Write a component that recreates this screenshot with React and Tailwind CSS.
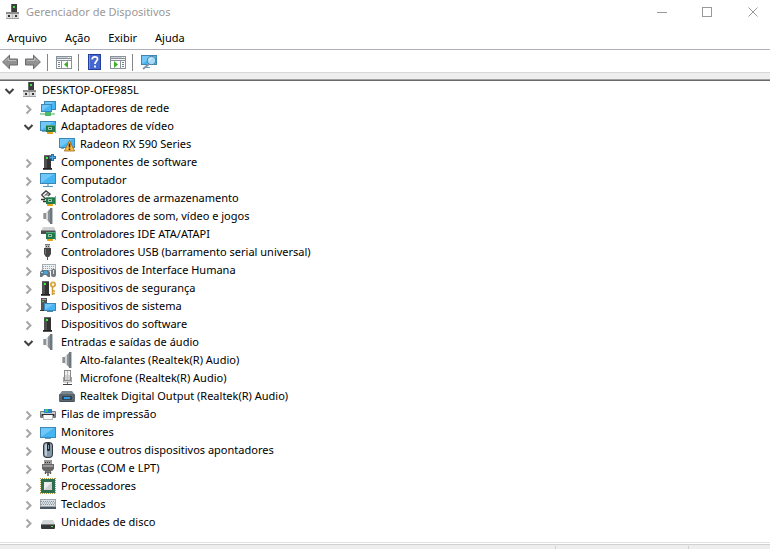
import React, { useState } from "react";

const Svg = ({ children, className = "w-4 h-4" }) => (
  <svg viewBox="0 0 16 16" className={`shrink-0 ${className}`} aria-hidden="true">
    {children}
  </svg>
);

/* Shared icon parts */
const Screen = ({ x, y, w, h }) => (
  <>
    <rect x={x} y={y} width={w} height={h} fill="#3a87b8" />
    <rect x={x + 1} y={y + 1} width={w - 2} height={h - 2} fill="#45b4f3" />
    <path
      d={`M${x + 1} ${y + h - 1}V${y + 1}H${x + w - 2}Z`}
      fill="#8fd4fa"
      opacity="0.6"
    />
  </>
);

const Tower = ({ x }) => (
  <>
    <rect x={x + 1} y="1" width="7" height="13" fill="#333" />
    <rect x={x + 1} y="1" width="3" height="13" fill="#505050" />
    <rect x={x + 1} y="1" width="7" height="1" fill="#6b6b6b" />
    <rect x={x + 3} y="3" width="2" height="2" fill="#3df03d" />
    <rect x={x} y="14" width="9" height="1" fill="#222" />
    <rect x={x} y="15" width="9" height="1" fill="#555" />
  </>
);

const Board = ({ x, y }) => (
  <>
    <rect x={x + 1} y={y + 6} width="6" height="3" fill="#f2ab1c" />
    <path d={`M${x + 3} ${y + 7}v2M${x + 5} ${y + 7}v2`} stroke="#c9820f" strokeWidth=".5" />
    <rect x={x} y={y} width="9" height="7" fill="#217a4c" />
    <rect x={x} y={y} width="9" height="1" fill="#58a47c" />
    <rect x={x + 2} y={y + 2} width="4" height="3" fill="#8fc3a5" />
    <rect x={x + 3} y={y + 3} width="2" height="1" fill="#2d5b44" />
    <rect x={x + 9} y={y - 1} width="1" height="9" fill="#8b9a91" />
  </>
);

const RootIcon = () => (
  <Svg>
    <rect x="7" y="0" width="6" height="9" fill="#3c3c3c" />
    <rect x="7" y="0" width="1" height="9" fill="#666" />
    <rect x="9" y="2" width="2" height="2" fill="#3fe03f" />
    <rect x="2" y="8" width="13" height="2" fill="#8e8e8e" />
    <rect x="2" y="10" width="13" height="5" fill="#dcdcdc" />
    <rect x="2" y="14" width="13" height="1" fill="#a0a0a0" />
    <rect x="4" y="11" width="2" height="2" fill="#333" />
    <rect x="11" y="11" width="2" height="2" fill="#333" />
    <rect x="8" y="10" width="1" height="4" fill="#bbb" />
  </Svg>
);

const NetworkIcon = () => (
  <Svg>
    <Screen x={4} y={1} w={12} h={9} />
    <Screen x={1} y={4} w={11} h={8} />
    <rect x="6" y="12" width="3" height="2" fill="#3a9a50" />
    <rect x="0" y="13" width="15" height="2" fill="#9fd6ad" />
    <rect x="5" y="12" width="6" height="4" fill="#4cb868" />
  </Svg>
);

const DisplayIcon = () => (
  <Svg>
    <Screen x={0} y={3} w={16} h={10} />
    <rect x="2" y="13" width="4" height="1" fill="#80a5bd" />
    <Board x={6} y={7} />
  </Svg>
);

const WarningIcon = () => (
  <Svg>
    <Screen x={0} y={2} w={16} h={10} />
    <rect x="2" y="12" width="3" height="1" fill="#80a5bd" />
    <path d="M10.5 4.5 15.6 15H5.4Z" fill="#fbbd45" stroke="#9c6a1a" strokeWidth=".8" strokeLinejoin="round" />
    <path d="M10.5 7.5v4M10.5 12.5v1.5" stroke="#272016" strokeWidth="1.6" />
  </Svg>
);

const SoftwareComponentIcon = () => (
  <Svg>
    <Tower x={3} />
    <path d="M12.5 0v7M9 3.5h7" stroke="#1b75bb" strokeWidth="3" />
    <path d="M12.5 1v5M10 3.5h5" stroke="#55a7df" strokeWidth="1" />
  </Svg>
);

const ComputerIcon = () => (
  <Svg>
    <Screen x={0} y={1} w={16} h={11} />
    <rect x="7" y="12" width="2" height="2" fill="#9cc3dc" />
    <rect x="3" y="14" width="10" height="1" fill="#5a9bc6" />
  </Svg>
);

const StorageIcon = () => (
  <Svg>
    <path d="M1.5 5 6 1l4 3-2 2M1.5 5 6 9" fill="none" stroke="#444" strokeWidth="1.5" />
    <path d="M4.5 5.5 8 3M5 5h4" stroke="#777" strokeWidth="1.2" />
    <path d="M1 9.5h4M3 11.5h3" stroke="#333" strokeWidth="1.4" />
    <Board x={6} y={7} />
  </Svg>
);

const SpeakerIcon = () => (
  <Svg>
    <rect x="3" y="5" width="3" height="6" fill="#8c9196" />
    <rect x="3" y="5" width="1" height="6" fill="#b0b5b9" />
    <path d="M6 5 11 0v16L6 11Z" fill="#a9aeb2" />
    <path d="M6 5 8 3v10L6 11Z" fill="#d3d6d8" />
    <path d="M8 3 10 1v14L8 13Z" fill="#8a9197" />
    <rect x="10" y="0" width="2" height="16" fill="#6f777e" />
    <rect x="12" y="0" width="1" height="16" fill="#bcc2c6" />
  </Svg>
);

const IdeIcon = () => (
  <Svg>
    <path d="M3 1h11l2 4H1Z" fill="#cfd1d3" />
    <rect x="1" y="4" width="14" height="4" fill="#4b4d4f" />
    <rect x="1" y="4" width="14" height="1" fill="#8d9092" />
    <Board x={6} y={6} />
  </Svg>
);

const UsbIcon = () => (
  <Svg>
    <rect x="5" y="0" width="5" height="5" fill="#b9b9b9" />
    <rect x="5" y="0" width="5" height="1" fill="#777" />
    <rect x="6" y="2" width="1" height="1" fill="#444" />
    <rect x="8" y="2" width="1" height="1" fill="#444" />
    <path d="M4 4h7v6l-2 3H6L4 10Z" fill="#454545" />
    <rect x="5" y="5" width="1" height="5" fill="#777" />
    <rect x="7" y="12" width="1" height="4" fill="#555" />
  </Svg>
);

const HidIcon = () => (
  <Svg>
    <rect x="2" y="2" width="14" height="7" fill="#a5adb5" />
    <rect x="3" y="3" width="12" height="5" fill="#eef1f3" />
    <path d="M3 4.5h12M3 6.5h12" stroke="#98a1a8" strokeDasharray="1 1" />
    <path d="M0 15V10l2-2h6l2 2v5H8l-2-2H4l-2 2Z" fill="#667784" />
    <rect x="1" y="10" width="2" height="1" fill="#c5d6e0" />
    <rect x="4" y="9" width="3" height="3" fill="#45a6dd" />
    <rect x="7" y="10" width="1" height="2" fill="#d46a5f" />
    <rect x="11" y="7" width="5" height="8" rx="2" fill="#737b81" />
    <rect x="13" y="8" width="1" height="4" fill="#dfe5e8" />
  </Svg>
);

const SecurityIcon = () => (
  <Svg>
    <Tower x={1} />
    <circle cx="13" cy="4.5" r="2.2" fill="none" stroke="#dba63c" strokeWidth="1.8" />
    <path d="M12.5 6v9M13 11h2M13 13.5h2" stroke="#cf9a35" strokeWidth="1.5" />
  </Svg>
);

const SystemIcon = () => (
  <Svg>
    <rect x="1" y="0" width="6" height="13" fill="#555" />
    <rect x="2" y="1" width="4" height="1" fill="#aaa" />
    <rect x="2" y="3" width="2" height="1" fill="#41da46" />
    <rect x="0" y="12" width="5" height="1" fill="#333" />
    <Screen x={4} y={5} w={12} h={8} />
    <rect x="7" y="13" width="6" height="1" fill="#4c86aa" />
  </Svg>
);

const SoftwareDeviceIcon = () => (
  <Svg>
    <Tower x={3} />
  </Svg>
);

const MicrophoneIcon = () => (
  <Svg>
    <rect x="5" y="0" width="7" height="11" fill="#8a8a8a" />
    <rect x="6" y="1" width="5" height="4" fill="#f1f1f1" />
    <rect x="6" y="5" width="5" height="5" fill="#d2d2d2" />
    <rect x="8" y="1" width="1" height="9" fill="#bdbdbd" />
    <path d="M4.5 7v5h8V7" fill="none" stroke="#a4a4a4" />
    <rect x="8" y="12" width="1" height="2" fill="#777" />
    <rect x="4" y="14" width="9" height="1" fill="#444" />
  </Svg>
);

const DigitalOutputIcon = () => (
  <Svg>
    <path d="M3 3h10l3 4H0Z" fill="#7b8791" />
    <rect x="0" y="6" width="16" height="8" rx="1" fill="#5a6771" />
    <rect x="3" y="8" width="10" height="4" fill="#37444e" />
    <rect x="5" y="9" width="6" height="2" fill="#2e9cec" />
    <rect x="1" y="13" width="14" height="1" fill="#46525b" />
  </Svg>
);

const PrinterIcon = () => (
  <Svg>
    <rect x="0" y="5" width="16" height="7" rx="1" fill="#74797d" />
    <rect x="1" y="6" width="14" height="2" fill="#c9cdd0" />
    <rect x="4" y="3" width="8" height="4" fill="#2685c6" />
    <rect x="5" y="3" width="3" height="3" fill="#3fc45b" />
    <rect x="2" y="8" width="12" height="2" fill="#303335" />
    <rect x="3" y="9" width="10" height="5" fill="#b5babd" />
    <rect x="4" y="9" width="8" height="4" fill="#fafafa" />
  </Svg>
);

const MonitorIcon = () => (
  <Svg>
    <Screen x={0} y={3} w={16} h={11} />
    <rect x="5" y="14" width="6" height="1" fill="#6e9fbd" />
  </Svg>
);

const MouseIcon = () => (
  <Svg>
    <rect x="3" y="0" width="10" height="16" rx="4" fill="#343a40" />
    <rect x="4" y="1" width="8" height="14" rx="3" fill="#8497a8" />
    <rect x="5" y="2" width="2" height="12" rx="1" fill="#bdcad5" />
    <rect x="7" y="1" width="3" height="8" rx="1" fill="#20262b" />
    <rect x="8" y="3" width="1" height="4" fill="#8c9aa5" />
  </Svg>
);

const PortIcon = () => (
  <Svg>
    <rect x="4" y="0" width="8" height="4" fill="#9a9a9a" />
    <path d="M5 2.5h6" stroke="#333" strokeDasharray="1 1" />
    <path d="M2 4h12v5l-2 2H4L2 9Z" fill="#666" />
    <rect x="3" y="5" width="10" height="2" fill="#999" />
    <path d="M5 11h6v2H5z" fill="#777" />
    <path d="M5.5 12v2M10.5 12v2M8 12v4" stroke="#555" strokeWidth="1.4" />
  </Svg>
);

const ProcessorIcon = () => (
  <Svg>
    <path d="M0 .5h16M0 15.5h16M.5 0v16M15.5 0v16" stroke="#b29a4a" strokeDasharray="1 1" />
    <rect x="1" y="1" width="14" height="14" fill="#2f6e4c" />
    <rect x="4" y="4" width="8" height="8" fill="#cfcfcf" />
    <path d="M4 12V4h8Z" fill="#ececec" />
  </Svg>
);

const KeyboardIcon = () => (
  <Svg>
    <rect x="0" y="3" width="16" height="10" fill="#9aa4ad" />
    <rect x="1" y="4" width="14" height="6" fill="#d8dde1" />
    <path d="M1 5.5h14M1 8.5h14" stroke="#8a959f" strokeDasharray="1 1" />
    <path d="M2 7h13" stroke="#8a959f" strokeDasharray="1 1" />
    <rect x="0" y="11" width="16" height="2" fill="#4b5661" />
  </Svg>
);

const DiskIcon = () => (
  <Svg>
    <path d="M3 6h10l2 4H1Z" fill="#d3d5d7" />
    <rect x="1" y="10" width="14" height="5" rx="1" fill="#343638" />
    <rect x="1" y="10" width="14" height="1" fill="#7b7e80" />
    <rect x="11" y="12" width="2" height="1" fill="#45e343" />
  </Svg>
);

/* Toolbar drawings */
const ArrowIcon = ({ flip }) => (
  <Svg className={flip ? "w-4 h-4 -scale-x-100" : "w-4 h-4"}>
    <path
      d="M.6 8 7.5 1.2V5h8v6h-8v3.8Z"
      fill="#929292"
      stroke="#6a6a6a"
      strokeLinejoin="round"
    />
    <path d="M3 7.5 6.5 4v2.5H14" fill="none" stroke="#bbb" />
  </Svg>
);

const PanelIcon = ({ right }) => (
  <Svg>
    <rect x="0" y="2" width="16" height="13" fill="#89929b" />
    <rect x="1" y="3" width="14" height="1" fill="#c8ced4" />
    <rect x="12" y="3" width="1" height="1" fill="#fff" />
    <rect x="14" y="3" width="1" height="1" fill="#fff" />
    <rect x="1" y="5" width="14" height="1" fill="#f4f4f4" />
    {right ? (
      <>
        <rect x="1" y="7" width="9" height="7" fill="#fff" />
        <rect x="11" y="7" width="4" height="7" fill="#fff" />
        <path d="M12 8.5h2M12 10.5h2M12 12.5h2" stroke="#758391" />
        <path d="m4 7 4 3.5L4 14Z" fill="#3fae29" />
      </>
    ) : (
      <>
        <rect x="1" y="7" width="4" height="7" fill="#fff" />
        <rect x="6" y="7" width="9" height="7" fill="#fff" />
        <path d="M2 8.5h2M2 10.5h2M2 12.5h2" stroke="#758391" />
        <path d="m12 7-4 3.5 4 3.5Z" fill="#3fae29" />
      </>
    )}
  </Svg>
);

const HelpIcon = () => (
  <Svg>
    <rect x="1" width="13" height="16" fill="#233f9b" />
    <rect x="3" y="1" width="10" height="14" fill="#4467cf" />
    <rect x="2" y="1" width="1" height="14" fill="#7891dd" />
    <path
      d="M5.2 5.5C5.2 2 10.5 2 10.5 5c0 2-2.5 2.2-2.5 5M8 11.5v2"
      fill="none"
      stroke="#fff"
      strokeWidth="1.8"
    />
  </Svg>
);

const ScanIcon = () => (
  <Svg>
    <Screen x={0} y={1} w={16} h={10} />
    <rect x="3" y="13" width="6" height="1" fill="#5a9bc6" />
    <path d="m8 10-6 5" stroke="#8297a5" strokeWidth="1.8" />
    <circle cx="10.5" cy="6.5" r="4.2" fill="#a4dbf8" stroke="#587f98" />
    <path d="M8.5 6.5a2 2 0 0 1 2-2" fill="none" stroke="#e9f8ff" />
  </Svg>
);

const devices = [
  { name: "Adaptadores de rede", Icon: NetworkIcon },
  {
    name: "Adaptadores de vídeo",
    Icon: DisplayIcon,
    open: true,
    items: [{ name: "Radeon RX 590 Series", Icon: WarningIcon }],
  },
  { name: "Componentes de software", Icon: SoftwareComponentIcon },
  { name: "Computador", Icon: ComputerIcon },
  { name: "Controladores de armazenamento", Icon: StorageIcon },
  { name: "Controladores de som, vídeo e jogos", Icon: SpeakerIcon },
  { name: "Controladores IDE ATA/ATAPI", Icon: IdeIcon },
  { name: "Controladores USB (barramento serial universal)", Icon: UsbIcon },
  { name: "Dispositivos de Interface Humana", Icon: HidIcon },
  { name: "Dispositivos de segurança", Icon: SecurityIcon },
  { name: "Dispositivos de sistema", Icon: SystemIcon },
  { name: "Dispositivos do software", Icon: SoftwareDeviceIcon },
  {
    name: "Entradas e saídas de áudio",
    Icon: SpeakerIcon,
    open: true,
    items: [
      { name: "Alto-falantes (Realtek(R) Audio)", Icon: SpeakerIcon },
      { name: "Microfone (Realtek(R) Audio)", Icon: MicrophoneIcon },
      { name: "Realtek Digital Output (Realtek(R) Audio)", Icon: DigitalOutputIcon },
    ],
  },
  { name: "Filas de impressão", Icon: PrinterIcon },
  { name: "Monitores", Icon: MonitorIcon },
  { name: "Mouse e outros dispositivos apontadores", Icon: MouseIcon },
  { name: "Portas (COM e LPT)", Icon: PortIcon },
  { name: "Processadores", Icon: ProcessorIcon },
  { name: "Teclados", Icon: KeyboardIcon },
  { name: "Unidades de disco", Icon: DiskIcon },
];

const Chevron = ({ open }) => (
  <svg viewBox="0 0 11 11" className="w-[11px] h-[11px]" aria-hidden="true">
    {open ? (
      <path d="m1.5 3 4 4 4-4" fill="none" stroke="#404040" strokeWidth="2" />
    ) : (
      <path d="m3.5 1.5 4 4-4 4" fill="none" stroke="#a6a6a6" strokeWidth="2" />
    )}
  </svg>
);

const TreeNode = ({ node, leaf }) => {
  const [open, setOpen] = useState(Boolean(node.open));
  const { Icon, name, items } = node;

  return (
    <li>
      <div className="flex h-[18px] items-center">
        {leaf ? (
          <span className="w-[19px]" />
        ) : (
          <button
            type="button"
            aria-label={name}
            aria-expanded={open}
            onClick={() => setOpen(!open)}
            className="flex w-[19px] justify-center pt-[2px]"
          >
            <Chevron open={open} />
          </button>
        )}
        <span className="ml-[2px] flex items-center gap-[5px]">
          <Icon />
          <span className="whitespace-nowrap">{name}</span>
        </span>
      </div>
      {open && items && (
        <ul className="pl-[19px]">
          {items.map((item) => (
            <TreeNode key={item.name} node={item} leaf={!node.root} />
          ))}
        </ul>
      )}
    </li>
  );
};

const root = {
  name: "DESKTOP-OFE985L",
  Icon: RootIcon,
  open: true,
  root: true,
  items: devices,
};

const Separator = () => <span className="ml-[6px] mr-2 h-[17px] w-px bg-[#858585]" />;

const App = () => {
  return (
    <div className="flex min-h-screen flex-col bg-white font-['Noto_Sans','Open_Sans',sans-serif] text-[11px] leading-[18px] text-black">
      {/* Title bar */}
      <header className="flex h-6 items-center pl-1 pr-[11px]">
        <RootIcon />
        <h1 className="ml-[6px] flex-1 text-[#999]">Gerenciador de Dispositivos</h1>
        <div className="flex gap-[35px]">
          <button type="button" aria-label="Minimizar">
            <svg viewBox="0 0 11 11" className="w-[11px] h-[11px]">
              <path d="M1 5.5h10" stroke="#999" />
            </svg>
          </button>
          <button type="button" aria-label="Maximizar">
            <svg viewBox="0 0 11 11" className="w-[11px] h-[11px]">
              <rect x=".5" y=".5" width="9" height="9" fill="none" stroke="#999" />
            </svg>
          </button>
          <button type="button" aria-label="Fechar">
            <svg viewBox="0 0 11 11" className="w-[11px] h-[11px]">
              <path d="m.5.5 9 9M9.5.5l-9 9" stroke="#999" />
            </svg>
          </button>
        </div>
      </header>

      {/* Menu */}
      <nav className="flex h-[26px] items-center gap-[18px] border-b border-[#b0b0b8] pl-[7px] pt-[2px]">
        <button type="button">Arquivo</button>
        <button type="button">Ação</button>
        <button type="button">Exibir</button>
        <button type="button">Ajuda</button>
      </nav>

      {/* Toolbar */}
      <div className="flex h-[22px] items-center pl-[2px] pt-[2px]">
        <button type="button" aria-label="Voltar">
          <ArrowIcon />
        </button>
        <button type="button" aria-label="Avançar" className="ml-[7px]">
          <ArrowIcon flip />
        </button>
        <Separator />
        <button type="button" aria-label="Mostrar árvore">
          <PanelIcon />
        </button>
        <Separator />
        <button type="button" aria-label="Ajuda">
          <HelpIcon />
        </button>
        <button type="button" aria-label="Mostrar ações" className="ml-[7px]">
          <PanelIcon right />
        </button>
        <Separator />
        <button type="button" aria-label="Verificar alterações de hardware">
          <ScanIcon />
        </button>
      </div>
      <div className="h-[9px] border-b border-t border-b-[#696969] border-t-[#d8d8d8] bg-[#eee]">
        <div className="h-[7px] border-b border-[#a0a0a0]" />
      </div>

      {/* Device tree */}
      <main className="flex-1">
        <ul>
          <TreeNode node={root} />
        </ul>
      </main>

      {/* Status bar */}
      <footer className="border-t border-[#e0e0e0] pt-px">
        <div className="flex h-[5px] border-t border-[#d0d0d0] bg-[#eee] pt-px">
          <span className="flex-1" />
          <span className="w-[133px] border-l border-[#d0d0d0]" />
          <span className="w-[82px] border-l border-[#d0d0d0]" />
        </div>
      </footer>
    </div>
  );
};

export default App;
